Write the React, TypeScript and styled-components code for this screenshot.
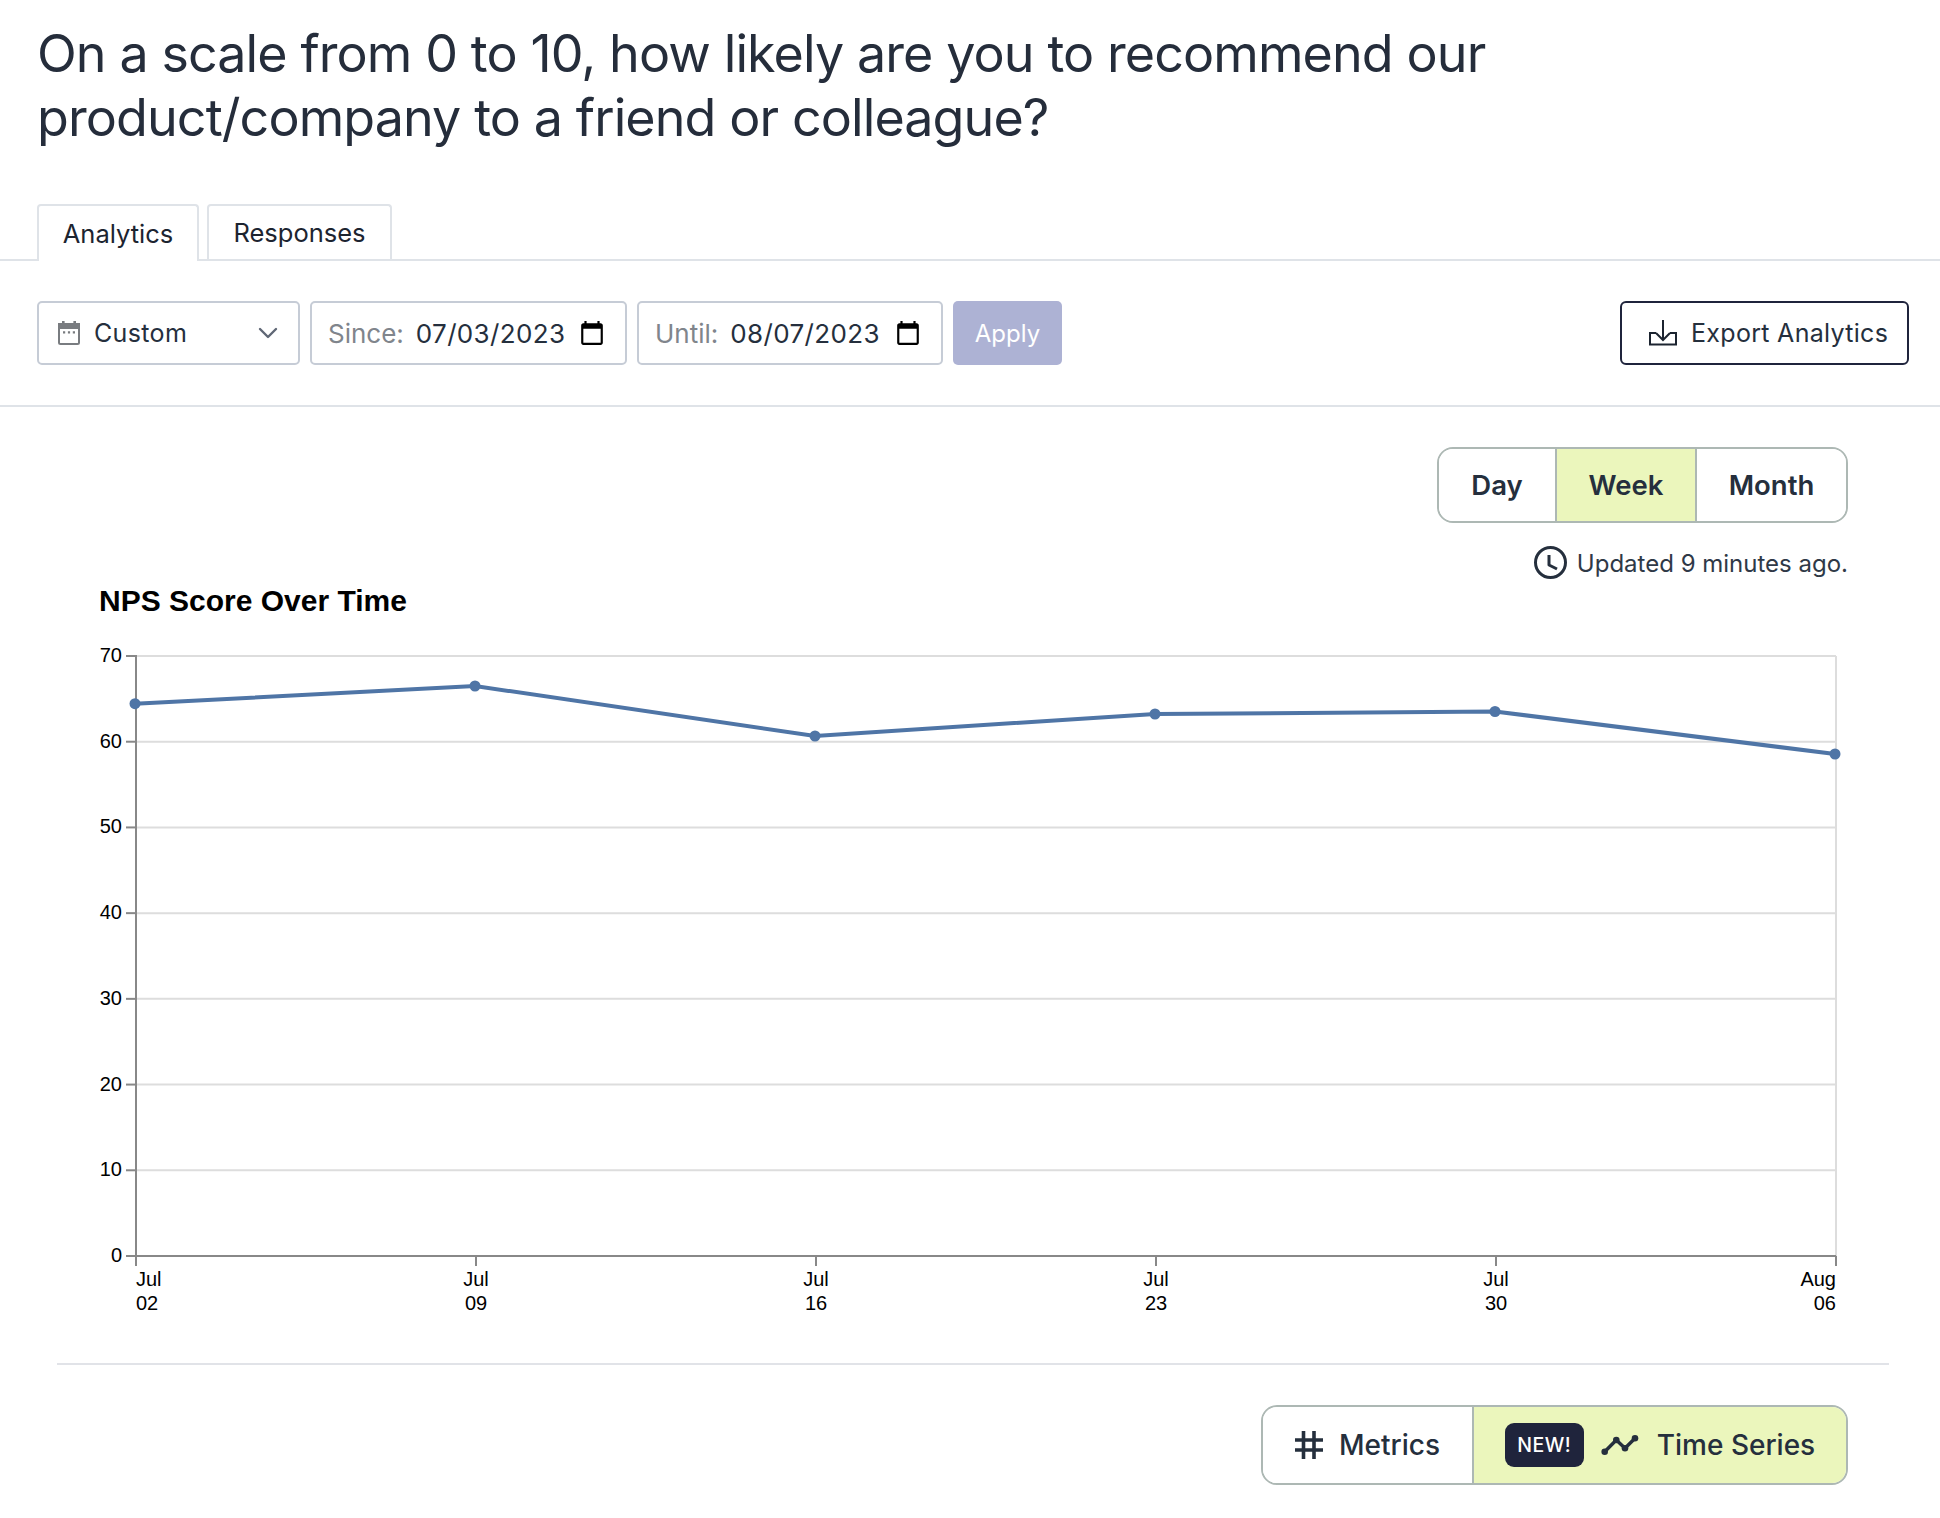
import React from 'react';
import styled, { createGlobalStyle } from 'styled-components';

const GlobalStyle = createGlobalStyle`
  * {
    box-sizing: border-box;
  }
  html,
  body {
    margin: 0;
    background: #fff;
    font-family: Inter, 'Liberation Sans', sans-serif;
    color: #252f3d;
  }
`;

const Page = styled.div`
  width: 1940px;
  height: 1518px;
  overflow: hidden;
`;

const Title = styled.h1`
  margin: 0;
  padding: 22px 32px 54px 37px;
  font-size: 52px;
  font-weight: 400;
  line-height: 64px;
  letter-spacing: -0.9px;
  color: #252d3b;
`;

const TabBar = styled.div`
  display: flex;
  gap: 8px;
  height: 57px;
  padding-left: 37px;
  border-bottom: 2px solid #dfe3e8;
`;

const Tab = styled.div<{ $active?: boolean }>`
  display: flex;
  align-items: center;
  justify-content: center;
  width: ${(p) => (p.$active ? '162px' : '185px')};
  height: ${(p) => (p.$active ? '57px' : '55px')};
  background: #fff;
  border: 2px solid #dfe3e8;
  border-bottom: 0;
  border-radius: 4px 4px 0 0;
  font-size: 25.5px;
  color: #1c2430;
`;

const Toolbar = styled.div`
  display: flex;
  align-items: flex-start;
  gap: 10px;
  height: 146px;
  padding: 40px 31px 0 37px;
  border-bottom: 2px solid #dfe3e8;
`;

const Field = styled.div<{ $width: number; $pad: number }>`
  display: flex;
  align-items: center;
  width: ${(p) => p.$width}px;
  height: 64px;
  padding: 0 20px 0 ${(p) => p.$pad}px;
  background: #fff;
  border: 2px solid #c6ccd6;
  border-radius: 5px;
  font-size: 26px;
  letter-spacing: 0.35px;
`;

const SelectText = styled.span`
  flex: 1;
  margin-left: 14px;
  font-size: 25px;
`;

const FieldLabel = styled.span`
  margin-right: 12px;
  color: #80858c;
  letter-spacing: 0;
`;

const FieldValue = styled.span`
  flex: 1;
`;

const ApplyButton = styled.button`
  width: 109px;
  height: 64px;
  padding: 0;
  border: 0;
  border-radius: 5px;
  background: #adb2d4;
  color: #fff;
  font-family: inherit;
  font-size: 24px;
`;

const ExportButton = styled.button`
  display: flex;
  align-items: center;
  gap: 14px;
  width: 289px;
  height: 64px;
  margin-left: auto;
  padding: 0 0 0 27px;
  background: #fff;
  border: 2px solid #1f243c;
  border-radius: 6px;
  font-family: inherit;
  font-size: 25px;
  letter-spacing: 0.3px;
  color: #252f3d;
`;

const Content = styled.div`
  padding-top: 40px;
`;

const RangeRow = styled.div`
  display: flex;
  justify-content: flex-end;
  padding-right: 92px;
`;

const Segmented = styled.div<{ $height: number }>`
  display: flex;
  height: ${(p) => p.$height}px;
  border: 2px solid #adb8b4;
  border-radius: 16px;
  overflow: hidden;
`;

const Segment = styled.div<{ $width: number; $active?: boolean; $mode?: boolean }>`
  display: flex;
  align-items: center;
  justify-content: center;
  width: ${(p) => p.$width}px;
  background: ${(p) => (p.$active ? '#ebf6bc' : '#fff')};
  font-size: ${(p) => (p.$mode ? '28px' : '27.5px')};
  font-weight: ${(p) => (p.$mode ? 500 : 600)};
  color: #252f3d;
  & + & {
    border-left: 2px solid #adb8b4;
  }
`;

const Updated = styled.div`
  display: flex;
  align-items: center;
  justify-content: flex-end;
  gap: 10px;
  height: 33px;
  margin-top: 23px;
  padding-right: 92px;
  font-size: 24px;
  color: #2f3947;
`;

const UpdatedText = styled.span`
  padding-top: 2px;
`;

const ChartWrap = styled.div`
  height: 786px;
  margin: 0 51px 0 57px;
  border-bottom: 2px solid #e1e3e8;
`;

const ChartSvg = styled.svg`
  display: block;
  font-family: 'Liberation Sans', Arial, sans-serif;
`;

const BottomRow = styled.div`
  display: flex;
  justify-content: flex-end;
  padding: 40px 92px 0 0;
`;

const Badge = styled.span`
  display: flex;
  align-items: center;
  justify-content: center;
  width: 79px;
  height: 44px;
  margin-right: 17px;
  border-radius: 9px;
  background: #1f243c;
  color: #fff;
  font-size: 19.5px;
  font-weight: 500;
  letter-spacing: 0.5px;
`;

const ModeLabel = styled.span<{ $gap: number }>`
  margin-left: ${(p) => p.$gap}px;
`;

const CalendarGlyph = () => (
  <svg width="22" height="24" viewBox="0 0 22 24" fill="none">
    <path d="M4 0h2.6v3H4zM15.4 0H18v3h-2.6z" fill="#797c80" />
    <rect x="1" y="3" width="20" height="20" rx="1.5" stroke="#797c80" strokeWidth="2" />
    <rect x="0" y="2" width="22" height="6" fill="#797c80" />
    <path d="M5 10.2h2.2v2.2H5zM9.9 10.2h2.2v2.2H9.9zM14.8 10.2H17v2.2h-2.2z" fill="#797c80" />
  </svg>
);

const ChevronGlyph = () => (
  <svg width="20" height="12" viewBox="0 0 20 12" fill="none">
    <path d="M2 2l8 8 8-8" stroke="#5f6775" strokeWidth="2.4" strokeLinecap="round" strokeLinejoin="round" />
  </svg>
);

const DateGlyph = () => (
  <svg width="26" height="26" viewBox="0 0 24 24" fill="#000">
    <path d="M20 3h-1V1h-2v2H7V1H5v2H4c-1.1 0-2 .9-2 2v16c0 1.1.9 2 2 2h16c1.1 0 2-.9 2-2V5c0-1.1-.9-2-2-2zm0 18H4V8h16v13z" />
  </svg>
);

const ExportGlyph = () => (
  <svg width="28" height="26" viewBox="0 0 28 26" fill="none" stroke="#1c2430" strokeWidth="2">
    <path d="M7 13H1v11.5h26V13h-6" />
    <path d="M14 0v20M7 13l7 7 7-7" />
  </svg>
);

const ClockGlyph = () => (
  <svg width="33" height="33" viewBox="0 0 33 33" fill="none" stroke="#252f3d" strokeWidth="3">
    <circle cx="16.5" cy="16.5" r="15" />
    <path d="M15 9v10l8 4" strokeLinejoin="round" />
  </svg>
);

const HashGlyph = () => (
  <svg width="28" height="28" viewBox="0 0 28 28" fill="none" stroke="#252f3d" strokeWidth="3.6">
    <path d="M0 9h28M0 19h28M8.5 0v28M19 0v28" />
  </svg>
);

const TrendGlyph = () => (
  <svg width="38" height="22" viewBox="0 0 38 22" fill="#252f3d" stroke="none">
    <path d="M3.7 17.7L15.3 6L24 14.3L34 4.3" fill="none" stroke="#252f3d" strokeWidth="3.4" strokeLinejoin="round" />
    <circle cx="3.7" cy="17.7" r="3.3" />
    <circle cx="15.3" cy="6" r="3.3" />
    <circle cx="24" cy="14.3" r="3.3" />
    <circle cx="34" cy="4.3" r="3.3" />
  </svg>
);

// svg origin sits at page x=57, y=579
const plotLeft = 79;
const plotRight = 1779;
const plotTop = 77;
const plotBottom = 677;
const yTicks = [70, 60, 50, 40, 30, 20, 10, 0];
const yFor = (v: number) => plotBottom - (v / 70) * (plotBottom - plotTop);

const xTicks = [
  { x: 79, month: 'Jul', day: '02', anchor: 'start' },
  { x: 419, month: 'Jul', day: '09', anchor: 'middle' },
  { x: 759, month: 'Jul', day: '16', anchor: 'middle' },
  { x: 1099, month: 'Jul', day: '23', anchor: 'middle' },
  { x: 1439, month: 'Jul', day: '30', anchor: 'middle' },
  { x: 1779, month: 'Aug', day: '06', anchor: 'end' },
];

const points = [
  [78, 124.7],
  [418, 107],
  [758, 157],
  [1098, 135],
  [1438, 132.5],
  [1778, 175],
];

const Chart = () => (
  <ChartSvg width="1832" height="784" viewBox="0 0 1832 784">
    <text x="42" y="32" fontSize="30" fontWeight="700" fill="#000">
      NPS Score Over Time
    </text>
    {yTicks.map((v) => (
      <g key={v}>
        {v > 0 && <line x1={plotLeft} x2={plotRight} y1={yFor(v)} y2={yFor(v)} stroke="#ddd" strokeWidth="2" />}
        <line x1={plotLeft - 10} x2={plotLeft} y1={yFor(v)} y2={yFor(v)} stroke="#888" strokeWidth="2" />
        <text x={plotLeft - 14} y={yFor(v) + 6} fontSize="20" textAnchor="end" fill="#000">
          {v}
        </text>
      </g>
    ))}
    <line x1={plotRight} x2={plotRight} y1={plotTop} y2={plotBottom} stroke="#ddd" strokeWidth="2" />
    <line x1={plotLeft} x2={plotLeft} y1={plotTop - 1} y2={plotBottom} stroke="#888" strokeWidth="2" />
    <line x1={plotLeft} x2={plotRight} y1={plotBottom} y2={plotBottom} stroke="#888" strokeWidth="2" />
    {xTicks.map((t) => (
      <g key={t.day}>
        <line x1={t.x} x2={t.x} y1={plotBottom} y2={plotBottom + 10} stroke="#888" strokeWidth="2" />
        <text x={t.x} y={plotBottom + 30} fontSize="20" textAnchor={t.anchor} fill="#000">
          {t.month}
        </text>
        <text x={t.x} y={plotBottom + 54} fontSize="20" textAnchor={t.anchor} fill="#000">
          {t.day}
        </text>
      </g>
    ))}
    <polyline
      points={points.map((p) => p.join(',')).join(' ')}
      fill="none"
      stroke="#4f75a6"
      strokeWidth="4"
    />
    {points.map((p) => (
      <circle key={p[0]} cx={p[0]} cy={p[1]} r="5.5" fill="#4f75a6" />
    ))}
  </ChartSvg>
);

export default function App() {
  return (
    <Page>
      <GlobalStyle />
      <Title>
        On a scale from 0 to 10, how likely are you to recommend our
        <br />
        product/company to a friend or colleague?
      </Title>
      <TabBar>
        <Tab $active>Analytics</Tab>
        <Tab>Responses</Tab>
      </TabBar>
      <Toolbar>
        <Field $width={263} $pad={19}>
          <CalendarGlyph />
          <SelectText>Custom</SelectText>
          <ChevronGlyph />
        </Field>
        <Field $width={317} $pad={16}>
          <FieldLabel>Since:</FieldLabel>
          <FieldValue>07/03/2023</FieldValue>
          <DateGlyph />
        </Field>
        <Field $width={306} $pad={16}>
          <FieldLabel>Until:</FieldLabel>
          <FieldValue>08/07/2023</FieldValue>
          <DateGlyph />
        </Field>
        <ApplyButton>Apply</ApplyButton>
        <ExportButton>
          <ExportGlyph />
          Export Analytics
        </ExportButton>
      </Toolbar>
      <Content>
        <RangeRow>
          <Segmented $height={76}>
            <Segment $width={116}>Day</Segment>
            <Segment $width={140} $active>
              Week
            </Segment>
            <Segment $width={151}>Month</Segment>
          </Segmented>
        </RangeRow>
        <Updated>
          <ClockGlyph />
          <UpdatedText>Updated 9 minutes ago.</UpdatedText>
        </Updated>
        <ChartWrap>
          <Chart />
        </ChartWrap>
        <BottomRow>
          <Segmented $height={80}>
            <Segment $width={209} $mode>
              <HashGlyph />
              <ModeLabel $gap={16}>Metrics</ModeLabel>
            </Segment>
            <Segment $width={374} $mode $active>
              <Badge>NEW!</Badge>
              <TrendGlyph />
              <ModeLabel $gap={18}>Time Series</ModeLabel>
            </Segment>
          </Segmented>
        </BottomRow>
      </Content>
    </Page>
  );
}
